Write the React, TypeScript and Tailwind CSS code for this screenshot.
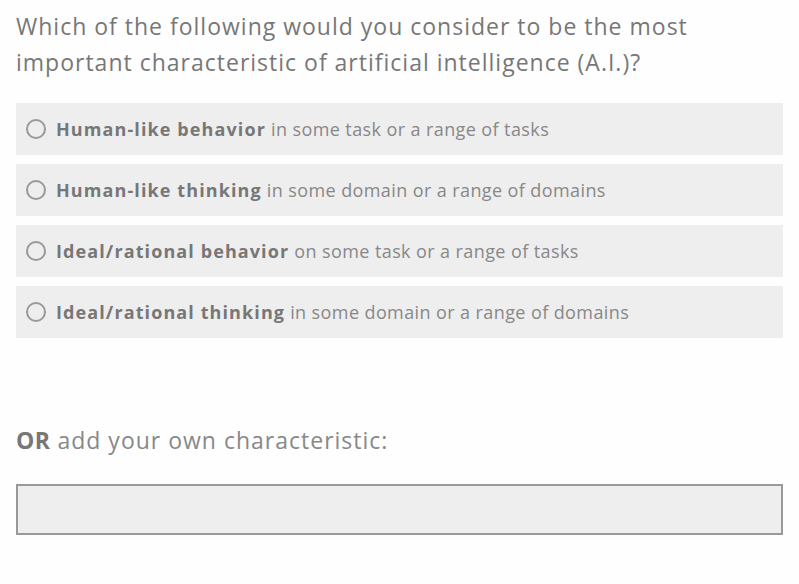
import React from "react";

const options = [
  { bold: "Human-like behavior", rest: "in some task or a range of tasks" },
  { bold: "Human-like thinking", rest: "in some domain or a range of domains" },
  { bold: "Ideal/rational behavior", rest: "on some task or a range of tasks" },
  { bold: "Ideal/rational thinking", rest: "in some domain or a range of domains" },
];

export default function App() {
  return (
    <div
      className="min-h-[584px] bg-[#fefefe] px-4 pt-[8px] text-[#777]"
      style={{ fontFamily: '"Open Sans", "Noto Sans", sans-serif' }}
    >
      <h1 className="text-[23px] leading-[36px] font-normal tracking-[1px] text-[#777]">
        Which of the following would you consider to be the most important
        characteristic of artificial intelligence (A.I.)?
      </h1>

      <div className="mt-[23px] flex flex-col gap-[9px]">
        {options.map((o, i) => (
          <label
            key={i}
            className="flex h-[52px] items-center bg-[#eeeeee] pl-[10px] cursor-pointer"
          >
            <span className="h-[20px] w-[20px] shrink-0 rounded-full border-2 border-[#999] bg-[#eee]" />
            <span className="ml-[10px] text-[18px] tracking-[0.4px] text-[#888]">
              <span className="font-bold tracking-[1.1px] text-[#777]">{o.bold}</span> {o.rest}
            </span>
          </label>
        ))}
      </div>

      <p className="mt-[84px] text-[23px] leading-[36px] tracking-[1px] text-[#888]">
        <span className="font-bold tracking-[0.5px] text-[#777]">OR</span> add your own characteristic:
      </p>

      <div className="mt-[26px] h-[51px] border-2 border-[#999] bg-[#eeeeee]" />
    </div>
  );
}
